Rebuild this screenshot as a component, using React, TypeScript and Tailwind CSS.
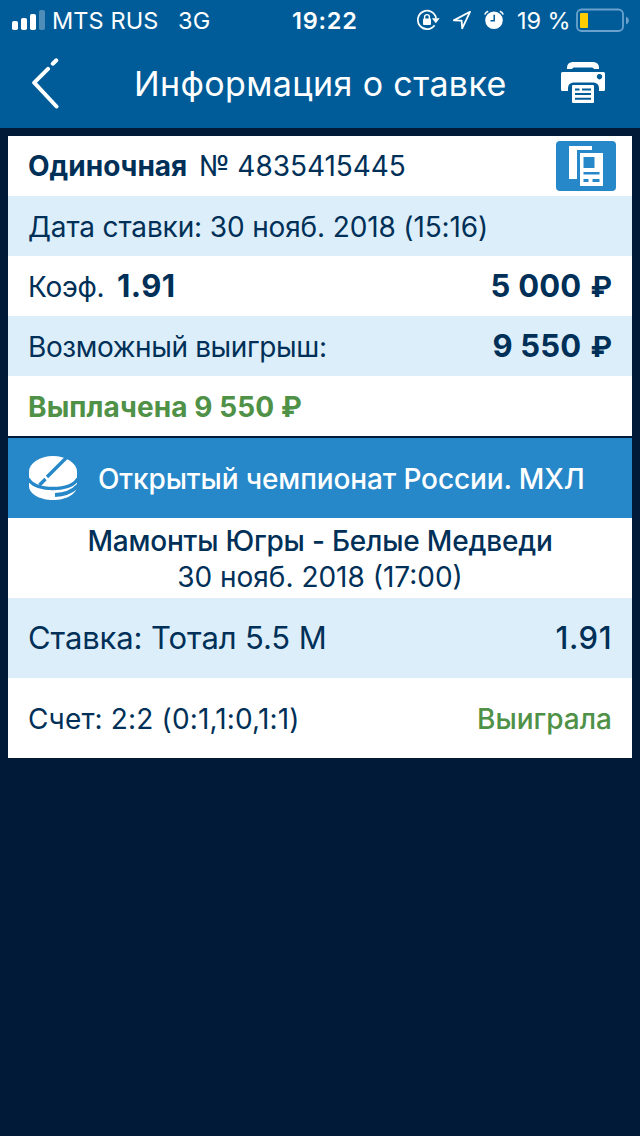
import type { ReactNode } from "react";
import clsx from "clsx";

interface RowProps {
  children: ReactNode;
  tinted?: boolean;
  className?: string;
}

function Row({ children, tinted, className }: RowProps) {
  return (
    <div
      className={clsx(
        "flex shrink-0 items-center justify-between whitespace-pre pl-5",
        tinted ? "bg-[#dceefa]" : "bg-white",
        className ?? "h-[60px] pr-5 pt-px",
      )}
    >
      {children}
    </div>
  );
}

function Amount({ value }: { value: string }) {
  return (
    <span className="flex items-baseline gap-[9px] text-[31px] font-bold">
      <span className="tracking-[0.2px]">{value}</span>
      <span className="text-[29px]">₽</span>
    </span>
  );
}

function SignalIcon() {
  return (
    <svg width="34" height="20" viewBox="0 0 34 20" fill="#fff">
      <rect x="0" y="11" width="6" height="9" rx="1.8" />
      <rect x="9" y="8" width="6" height="12" rx="1.8" />
      <rect x="18" y="4" width="6" height="16" rx="1.8" />
      <rect x="27" y="0" width="6" height="20" rx="1.8" opacity=".3" />
    </svg>
  );
}

function RotationLockIcon() {
  return (
    <svg width="24" height="22" viewBox="0 0 24 22" fill="none">
      <path
        d="M18.6 16.2A9.2 9.2 0 1 1 20.1 9.3"
        stroke="#fff"
        strokeWidth="1.7"
      />
      <path d="M15.9 9.2h7.8l-3.9 5z" fill="#fff" />
      <rect x="7" y="9.5" width="8" height="6.5" rx="1" fill="#fff" />
      <path d="M8.6 10V8a2.4 2.4 0 0 1 4.8 0v2" stroke="#fff" strokeWidth="1.4" />
    </svg>
  );
}

function LocationIcon() {
  return (
    <svg width="20" height="20" viewBox="0 0 20 20" fill="none">
      <path
        d="M18 1.8 1.8 10.4l7.8.2.6 7.8z"
        stroke="#fff"
        strokeWidth="1.8"
        strokeLinejoin="round"
      />
    </svg>
  );
}

function AlarmIcon() {
  return (
    <svg width="20" height="20" viewBox="0 0 20 20" fill="none">
      <circle cx="10" cy="10.3" r="8.8" fill="#fff" />
      <path
        d="M.8 4.5Q1.6 2 4.2 1.2M15.8 1.2Q18.4 2 19.2 4.5"
        stroke="#fff"
        strokeWidth="1.7"
      />
      <path d="M10.2 4.8v6H6.5" stroke="#005c99" strokeWidth="1.5" />
    </svg>
  );
}

function BatteryIcon() {
  return (
    <svg width="54" height="24" viewBox="0 0 54 24" fill="none">
      <rect
        x="1"
        y="1.5"
        width="46"
        height="21.5"
        rx="4.5"
        stroke="#6aa2cd"
        strokeWidth="1.8"
      />
      <rect x="4" y="5" width="8" height="15" rx="1" fill="#fc0" />
      <path d="M50 8.5q3 1.4 3 4t-3 4z" fill="#6aa2cd" />
    </svg>
  );
}

function BackIcon() {
  return (
    <svg width="28" height="52" viewBox="0 0 28 52" fill="none">
      <path
        d="M25.3 2.3 21.8 5.7M17 10.9 3.2 24.7 25.5 48.5"
        stroke="#fff"
        strokeWidth="4"
        strokeLinecap="round"
        strokeLinejoin="round"
      />
    </svg>
  );
}

function PrinterIcon() {
  return (
    <svg className="mb-0.5" width="44" height="42" viewBox="0 0 44 42" fill="none">
      <path
        d="M6 7V5.5A5.5 5.5 0 0 1 11.500 0h21A5.5 5.5 0 0 1 38 5.5V7h-5a2.2 2.2 0 0 0-2-1.5H13A2.2 2.2 0 0 0 11 7z"
        fill="#fff"
      />
      <path
        fillRule="evenodd"
        d="M1.5 10h41a1.5 1.5 0 0 1 1.5 1.5v16a1.5 1.5 0 0 1-1.5 1.5H38v-3a5.5 5.5 0 0 0-5.5-5.5h-20A5.5 5.5 0 0 0 7 26v3H1.5A1.5 1.5 0 0 1 0 27.5v-16A1.5 1.5 0 0 1 1.5 10zm37 2a2.7 2.7 0 1 0 .01 0z"
        fill="#fff"
      />
      <rect x="11" y="23" width="22" height="18" rx="1" fill="#fff" />
      <path
        d="M14 27.5h4.5M21 27.5h9M14 32h16M14 36.7h16"
        stroke="#005c99"
        strokeWidth="2"
      />
    </svg>
  );
}

function CouponIcon() {
  return (
    <svg width="34" height="40" viewBox="0 0 34 40" fill="none">
      <path d="M0 0h23v4H8v29H0z" fill="#fff" />
      <path d="M11 7h23v33H11z" fill="#fff" />
      <path
        d="M14.5 11h11v11h-11zM14.5 26h16v2.5h-16zM14.5 33h5v3h-5zM23.5 33h7v3h-7z"
        fill="#2788c9"
      />
    </svg>
  );
}

function PuckIcon() {
  return (
    <svg width="48" height="44" viewBox="0 0 48 44" fill="none">
      <path d="M0 16v14c0 8 11 14 24 14s24-6 24-14V16z" fill="#fff" />
      <ellipse cx="24" cy="15.8" rx="24" ry="15.8" fill="#fff" />
      <path
        d="M-1 22.5C3 29.5 13 32.5 24 32.5S45 29.5 49 22.5"
        stroke="#2788c9"
        strokeWidth="3.5"
      />
      <path d="M26 39c10-.5 18-4 23-9.5" stroke="#2788c9" strokeWidth="3.8" />
      <path
        d="M38 1 18 21M16.5 23l-6 6"
        stroke="#2788c9"
        strokeWidth="3.4"
      />
    </svg>
  );
}

function StatusBar() {
  return (
    <div className="flex h-10 items-center pl-3 text-[23.5px] leading-[42px]">
      <SignalIcon />
      <span className="ml-[6px] w-[126px] pt-px tracking-[0.1px]">MTS RUS</span>
      <span className="w-[114px] pt-px tracking-[0.2px]">3G</span>
      <span className="w-[124px] pt-px font-semibold tracking-[0.8px]">19:22</span>
      <RotationLockIcon />
      <span className="ml-[12px]">
        <LocationIcon />
      </span>
      <span className="ml-[12px]">
        <AlarmIcon />
      </span>
      <span className="ml-[13px] w-[59px] pt-px tracking-[-0.1px]">19 %</span>
      <BatteryIcon />
    </div>
  );
}

export default function App() {
  return (
    <div className="flex min-h-[1136px] w-[640px] flex-col whitespace-pre bg-[#001a38] font-['Inter','Noto_Sans',sans-serif] text-[28px] text-[#003057]">
      <header className="h-32 bg-[#005c99] text-white">
        <StatusBar />
        <div className="flex h-[88px] items-center pl-[31px] pr-[35px]">
          <BackIcon />
          <h1 className="ml-[75px] grow text-[34px] leading-[44px] tracking-[0.38px]">
            Информация о ставке
          </h1>
          <PrinterIcon />
        </div>
      </header>

      <main className="mx-2 mt-2 flex flex-col">
        <Row className="h-[60px] pr-4">
          <div className="flex items-baseline">
            <span className="w-[171px] font-bold">Одиночная</span>
            <span className="tracking-[-0.05px]">№ 4835415445</span>
          </div>
          <button className="flex h-[50px] w-[60px] items-center justify-center rounded-[4px] bg-[#2788c9]">
            <CouponIcon />
          </button>
        </Row>
        <Row tinted>
          <span className="tracking-[-0.14px]">
            Дата ставки: 30 нояб. 2018 (15:16)
          </span>
        </Row>
        <Row>
          <div className="flex items-baseline">
            <span className="w-[89px] tracking-[-0.3px]">Коэф.</span>
            <span className="text-[31px] font-bold tracking-[0.4px]">1.91</span>
          </div>
          <Amount value="5 000" />
        </Row>
        <Row tinted>
          <span className="tracking-[-0.38px]">Возможный выигрыш:</span>
          <Amount value="9 550" />
        </Row>
        <Row>
          <span className="font-bold tracking-[0.1px] text-[#4f9146]">
            Выплачена 9 550 ₽
          </span>
        </Row>

        <section className="mt-[2px] flex flex-col">
          <div className="flex h-20 items-center bg-[#2788c9] pl-[21px] font-medium text-white">
            <PuckIcon />
            <span className="ml-[21px] pt-px tracking-[-0.12px]">
              Открытый чемпионат России. МХЛ
            </span>
          </div>
          <div className="flex h-20 flex-col items-center justify-center bg-white pt-px leading-9">
            <span className="font-medium tracking-[-0.2px]">
              Мамонты Югры - Белые Медведи
            </span>
            <span>30 нояб. 2018 (17:00)</span>
          </div>
          <Row tinted className="h-20 pr-5 text-[31px]">
            <span className="tracking-[-0.1px]">Ставка: Тотал 5.5 М</span>
            <span className="font-medium tracking-[0.5px]">1.91</span>
          </Row>
          <Row className="h-20 pr-5 pt-px">
            <span className="tracking-[0.15px]">Счет: 2:2 (0:1,1:0,1:1)</span>
            <span className="font-medium text-[#4f9146]">Выиграла</span>
          </Row>
        </section>
      </main>
    </div>
  );
}
